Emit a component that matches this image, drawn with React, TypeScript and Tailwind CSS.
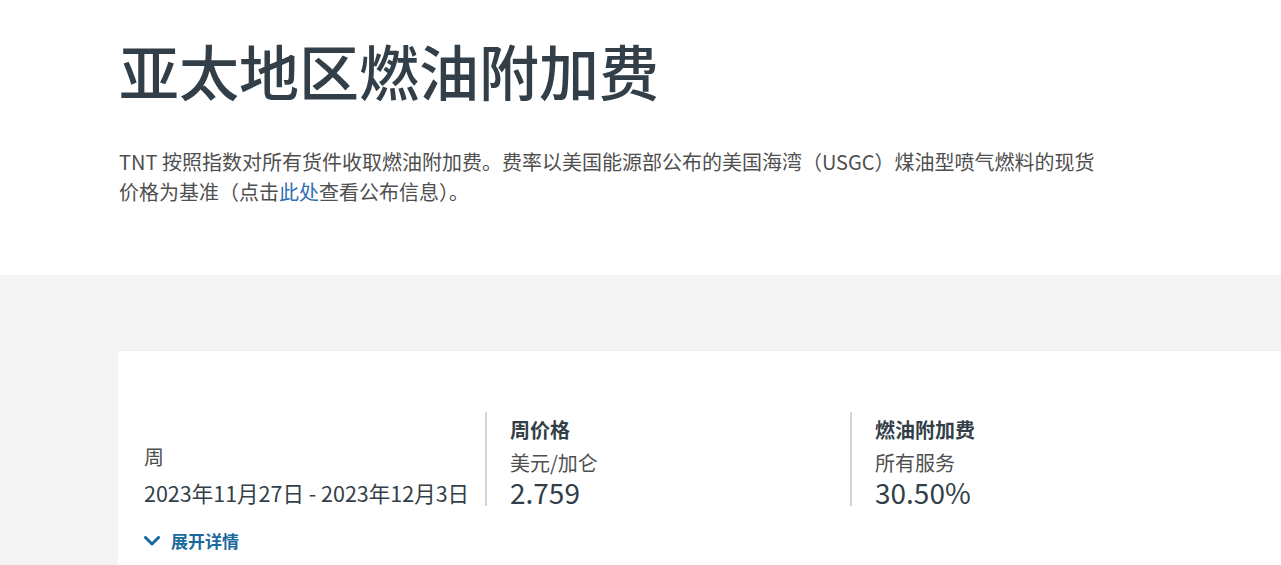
const font = { fontFamily: '"Noto Sans CJK SC", "Noto Sans", sans-serif' }

export default function App() {
  return (
    <div className="min-h-[565px] bg-white text-[#333f48]" style={font}>
      {/* Header */}
      <div className="pl-[119px] pt-[30px] pb-[68px]">
        <h1 className="text-[60px] leading-[80px] font-medium text-[#333f48]">亚太地区燃油附加费</h1>
        <p className="mt-[37px] w-[985px] text-[20px] leading-[30px] text-[#4f4f4f]">
          TNT 按照指数对所有货件收取燃油附加费。费率以美国能源部公布的美国海湾（USGC）煤油型喷气燃料的现货价格为基准（点击
          <a href="#" className="text-[#2f6db5]">此处</a>
          查看公布信息）。
        </p>
      </div>

      {/* Rates */}
      <div className="bg-[#f4f4f4] pt-[75px] h-[290px]">
        <div className="ml-[118px] h-full bg-white border-t border-[#ececec] pl-[26px] pt-[61px]">
          <div className="flex items-end">
            <div className="w-[341px]">
              <div className="text-[20px] leading-[30px] mb-[8px] text-[#4f4f4f]">周</div>
              <div className="text-[21.5px] leading-[26px] text-[#333f48]">2023年11月27日 - 2023年12月3日</div>
            </div>
            <div className="w-[365px] border-l-2 border-[#d4d4d4] pl-[23px]">
              <div className="text-[20px] leading-[36px] font-bold text-[#333f48]">周价格</div>
              <div className="text-[20px] leading-[30px] text-[#4f4f4f]">美元/加仑</div>
              <div className="text-[28px] leading-[28px] text-[#333f48]">2.759</div>
            </div>
            <div className="border-l-2 border-[#d4d4d4] pl-[23px]">
              <div className="text-[20px] leading-[36px] font-bold text-[#333f48]">燃油附加费</div>
              <div className="text-[20px] leading-[30px] text-[#4f4f4f]">所有服务</div>
              <div className="text-[28px] leading-[28px] text-[#333f48]">30.50%</div>
            </div>
          </div>
          <button className="mt-[23px] flex items-center gap-[11px] text-[17px] leading-[24px] font-bold text-[#1b6a9e]">
            <svg width="16" height="10" viewBox="0 0 16 10" fill="none">
              <path d="M1.5 1.5L8 8l6.5-6.5" stroke="currentColor" strokeWidth="3" strokeLinecap="round" strokeLinejoin="round" />
            </svg>
            展开详情
          </button>
        </div>
      </div>
    </div>
  )
}
